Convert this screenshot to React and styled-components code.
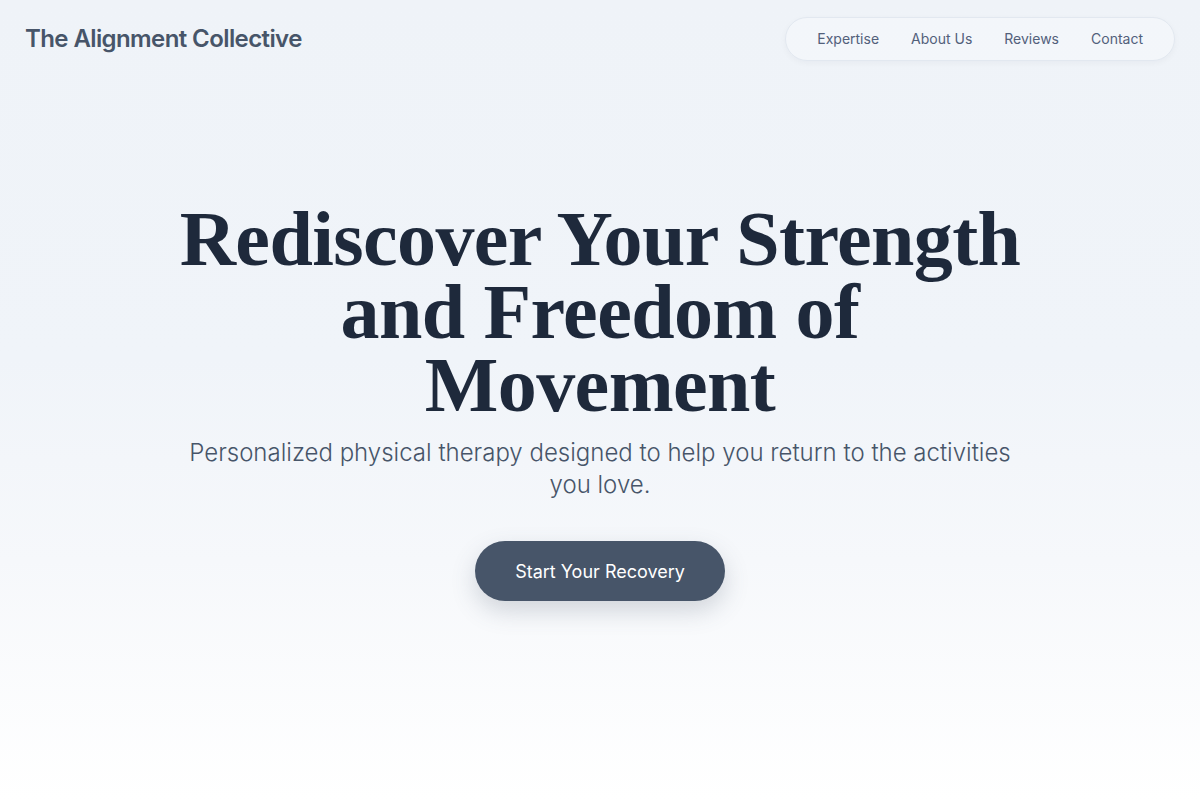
import styled, { createGlobalStyle } from "styled-components";

const GlobalStyle = createGlobalStyle`
  html, body {
    margin: 0;
    padding: 0;
  }
  body {
    font-family: Inter, "Noto Sans", sans-serif;
    background: linear-gradient(180deg, #eff3f8 0%, #f0f4f9 45%, #f6f8fb 70%, #ffffff 100%);
    min-height: 800px;
  }
`;

const Page = styled.div`
  min-height: 800px;
  display: flex;
  flex-direction: column;
`;

const Header = styled.header`
  display: flex;
  align-items: center;
  justify-content: space-between;
  padding: 17px 25px 16px 25px;
`;

const Logo = styled.div`
  font-size: 24px;
  font-weight: 600;
  letter-spacing: -0.6px;
  color: #475569;
  margin-top: -2px;
`;

const Nav = styled.nav`
  box-sizing: border-box;
  display: flex;
  align-items: center;
  gap: 32px;
  height: 44px;
  padding: 0 31px 1px;
  border-radius: 24px;
  border: 1px solid #e2e8f0;
  background: rgba(255, 255, 255, 0.25);
  box-shadow: 0 2px 6px rgba(15, 23, 42, 0.04);
`;

const NavLink = styled.a`
  font-size: 14px;
  color: #52607a;
  text-decoration: none;
  cursor: pointer;
`;

const Hero = styled.main`
  display: flex;
  flex-direction: column;
  align-items: center;
  text-align: center;
  padding-top: 125px;
`;

const Title = styled.h1`
  margin: 0;
  font-family: "Liberation Serif", "DejaVu Serif", serif;
  font-weight: 700;
  font-size: 78px;
  line-height: 73px;
  letter-spacing: -0.6px;
  color: #1e293b;
`;

const Subtitle = styled.p`
  margin: 16px 0 0 0;
  max-width: 840px;
  font-size: 24px;
  font-weight: 300;
  line-height: 32px;
  color: #475569;
`;

const Cta = styled.button`
  margin-top: 40px;
  width: 250px;
  height: 60px;
  border: none;
  border-radius: 30px;
  background: #475569;
  color: #ffffff;
  font-family: Inter, sans-serif;
  font-size: 18px;
  font-weight: 400;
  box-shadow: 0 10px 24px rgba(71, 85, 105, 0.22);
  cursor: pointer;
`;

const links = ["Expertise", "About Us", "Reviews", "Contact"];

export default function App() {
  return (
    <>
      <GlobalStyle />
      <Page>
        <Header>
          <Logo>The Alignment Collective</Logo>
          <Nav>
            {links.map((l) => (
              <NavLink key={l}>{l}</NavLink>
            ))}
          </Nav>
        </Header>
        <Hero>
          <Title>
            Rediscover Your Strength
            <br />
            and Freedom of
            <br />
            Movement
          </Title>
          <Subtitle>
            Personalized physical therapy designed to help you return to the activities you love.
          </Subtitle>
          <Cta>Start Your Recovery</Cta>
        </Hero>
      </Page>
    </>
  );
}
